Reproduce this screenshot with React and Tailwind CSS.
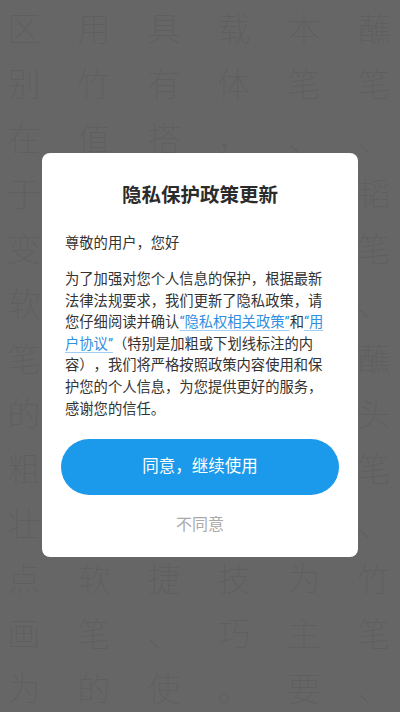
import React from 'react'

// backdrop page text; the middle cells of rows 3-9 sit under the dialog
const ROWS = [
  ['区', '用', '具', '载', '本', '蘸'],
  ['别', '竹', '有', '体', '笔', '笔'],
  ['在', '值', '搭', '，', '、', '、'],
  ['于', '', '', '', '', '韬'],
  ['变', '', '', '', '', '笔'],
  ['软', '', '', '', '', '、'],
  ['笔', '', '', '', '', '蘸'],
  ['的', '', '', '', '', '头'],
  ['粗', '', '', '', '', '笔'],
  ['壮', '', '', '', '', '、'],
  ['点', '软', '捷', '技', '为', '竹'],
  ['画', '笔', '、', '巧', '主', '笔'],
  ['为', '的', '使', '。', '要', '、'],
]

function Backdrop() {
  return (
    <div className="h-[712px] overflow-hidden bg-white pl-[7px] font-['Noto_Sans_CJK_SC',sans-serif] font-thin text-[#ededed]">
      {ROWS.map((row, i) => (
        <div key={i} className="flex h-[55px] items-center gap-[36px]">
          {row.map((ch, j) => (
            <span key={j} className="w-[34px] text-center text-[33px] leading-none">{ch}</span>
          ))}
        </div>
      ))}
    </div>
  )
}

export default function App() {
  return (
    <div className="relative w-[400px] h-[712px] overflow-hidden">
      <Backdrop />

      {/* modal overlay */}
      <div className="absolute inset-0 bg-black/60 flex items-start justify-center pt-[153px]">
        <div className="w-[316px] rounded-[8px] bg-white px-[23px] pt-[29px] pb-[20px] font-['Roboto','Noto_Sans_CJK_SC',sans-serif] text-[#333] [text-spacing-trim:space-all]">
          <h1 className="text-center text-[19.5px] leading-[28px] font-semibold text-[#2b2b2b]">隐私保护政策更新</h1>

          <p className="mt-[23px] text-[14.3px] leading-[21.6px]">尊敬的用户，您好</p>

          <p className="mt-[14.5px] text-[14.3px] leading-[21.6px]">
            为了加强对您个人信息的保护，根据最新法律法规要求，我们更新了隐私政策，请您仔细阅读并确认<a className="text-[#2f8fe0] underline decoration-[#9fcdf3] underline-offset-[3px]">“隐私权相关政策”</a>和<a className="text-[#2f8fe0] underline decoration-[#9fcdf3] underline-offset-[3px]">“用户协议”</a>（特别是加粗或下划线标注的内容），我们将严格按照政策内容使用和保护您的个人信息，为您提供更好的服务，感谢您的信任。
          </p>

          <button className="mt-[19px] -mx-[4px] w-[278px] h-[56px] rounded-full bg-[#1b99ea] text-white text-[16.5px]">
            同意，继续使用
          </button>

          <div className="mt-[18px] text-center text-[16px] leading-[24px] text-[#aaaaaa]">不同意</div>
        </div>
      </div>
    </div>
  )
}
